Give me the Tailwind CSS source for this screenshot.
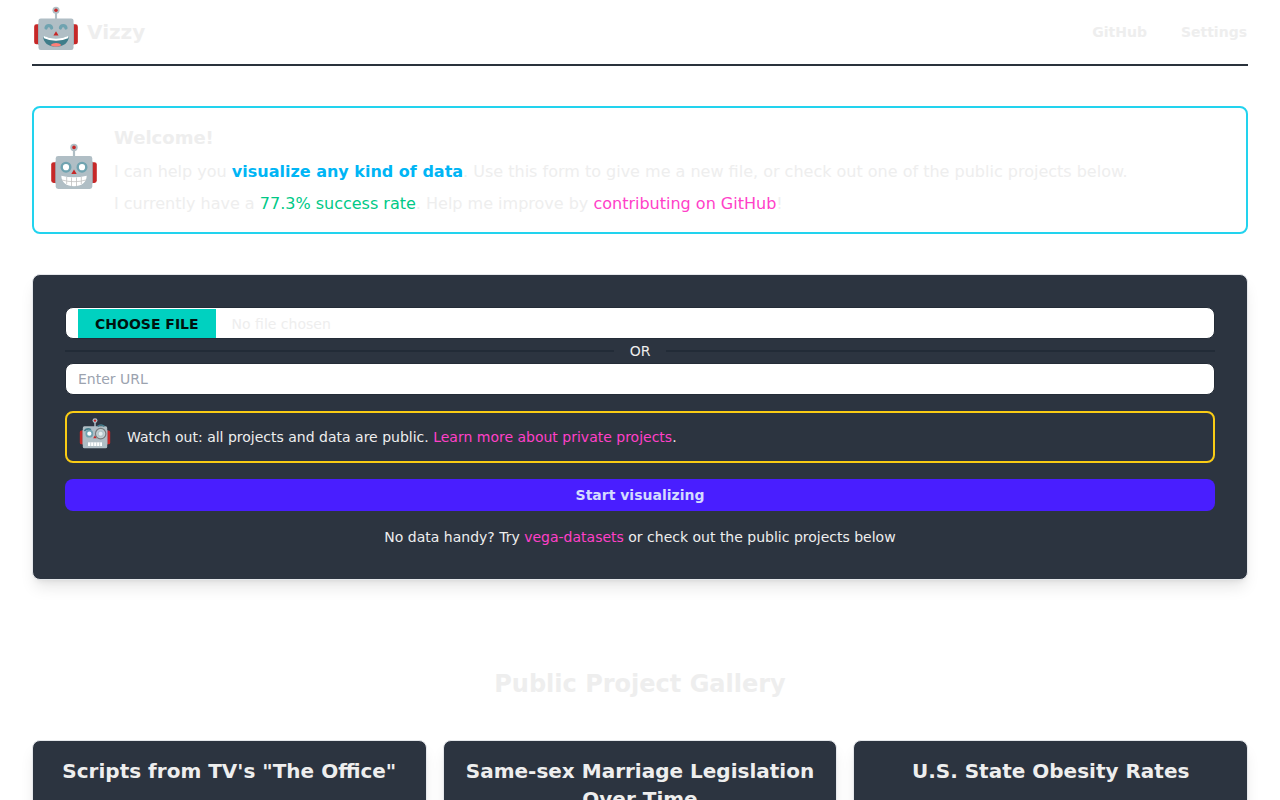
<!DOCTYPE html>
<html lang="en">
<head>
    <meta charset="UTF-8">
    <meta name="viewport" content="width=device-width, initial-scale=1.0">
    <title>Vizzy</title>
    <script src="https://cdn.jsdelivr.net/npm/@tailwindcss/browser@4"></script>
</head>
<body class="bg-white text-[#eeeeee] font-['DejaVu_Sans',sans-serif]">
    <!-- Shared robot head, faces are drawn on top -->
    <svg class="hidden" aria-hidden="true">
        <symbol id="robot" viewBox="0 0 48 48">
            <rect x="22.9" y="7" width="2.2" height="8" fill="#b0bec5"/>
            <circle cx="24" cy="5.4" r="3.7" fill="#b0bec5"/>
            <circle cx="24" cy="5.4" r="1.8" fill="#c62828"/>
            <rect x="1.2" y="20.2" width="8" height="20.8" rx="2.4" fill="#c62828"/>
            <rect x="38.8" y="20.2" width="8" height="20.8" rx="2.4" fill="#c62828"/>
            <path d="M5.3 20v21l1 1V19zM42.7 20v21l-1 1V19z" fill="#90a4ae"/>
            <rect x="5.7" y="14" width="36.6" height="33" rx="2.4" fill="#b0bec5"/>
            <path d="M24 27.5l2.7 4.4h-5.4z" fill="#c62828"/>
        </symbol>
    </svg>

    <div class="px-8 pb-8">
        <header class="flex h-[66px] items-center justify-between border-b-2 border-[#2a323c] px-px">
            <a href="#" class="flex items-center gap-2 text-xl font-bold">
                <span class="pb-2">
                    <svg class="block size-[46px]" viewBox="0 0 48 48" aria-hidden="true">
                        <use href="#robot"/>
                        <path d="M13.6 24c.4-3.3 5.400-3.300 5.800 0M28.600 24c.4-3.300 5.400-3.300 5.800 0" fill="none" stroke="#6fa3b0" stroke-width="3.400" stroke-linecap="round"/>
                        <path d="M10.500 32q13.500 6 27 0C37.300 39.500 32 43.400 24 43.400S10.700 39.500 10.500 32z" fill="#3e7d8a"/>
                        <path d="M10.800 32q13.200 6 26.400 0c0 1-.3 1.900-.7 2.600q-12.500 5.600-25 0c-.4-.7-.7-1.600-.7-2.600z" fill="#fff"/>
                        <path d="M18.300 42c2.500-3 9-3 11.400 0-3.500 1.900-8 1.900-11.400 0z" fill="#ff7f78"/>
                    </svg>
                </span>
                Vizzy
            </a>
            <nav class="flex gap-[34px] text-sm font-bold">
                <a href="#">GitHub</a>
                <a href="#">Settings</a>
            </nav>
        </header>

        <!-- Welcome -->
        <section class="mt-10 flex items-center gap-4 rounded-lg border-2 border-[#22d3ee] p-4">
            <div class="pb-2">
                <svg class="block size-12" viewBox="0 0 48 48" aria-hidden="true">
                    <use href="#robot"/>
                    <circle cx="16" cy="25.200" r="4.300" fill="#fff" stroke="#6fa3b0" stroke-width="2.400"/>
                    <circle cx="32" cy="25.200" r="4.300" fill="#fff" stroke="#6fa3b0" stroke-width="2.400"/>
                    <path d="M11.300 33.800q12.700 3 25.400 0C36.500 40.800 31.500 44.200 24 44.200S11.500 40.800 11.300 33.800z" fill="#fff"/>
                    <path d="M11.800 38q12.200 3.400 24.400 0M16.700 35v7M21.500 35.500v8.500M26.500 35.500v8.500M31.300 35v7" fill="none" stroke="#bfbfbf" stroke-width=".8"/>
                </svg>
            </div>
            <div class="space-y-2">
                <h1 class="text-lg/7 font-bold">Welcome!</h1>
                <p>I can help you <strong class="font-bold text-[#00b5f5]">visualize any kind of data</strong>. Use this form to give me a new file, or check out one of the public projects below.</p>
                <p>I currently have a <span class="text-[#00c987]">77.3% success rate</span>. Help me improve by <a href="#" class="text-[#ff40c8]">contributing on GitHub</a>!</p>
            </div>
        </section>

        <!-- Upload form -->
        <form class="mt-10 rounded-lg border border-[#e5e7eb] bg-[#2c3440] p-8 text-sm shadow-lg">
            <input type="file" aria-label="Data file"
                   class="block h-8 w-full overflow-hidden rounded-lg border border-[#242c37] bg-white pt-px pl-3 text-sm/[30px] file:mr-4 file:h-[30px] file:border-0 file:bg-[#00d1c0] file:px-[17px] file:text-sm file:font-bold file:uppercase file:text-[#00120f]">
            <div class="flex h-6 items-center gap-4">
                <span class="h-0.5 flex-1 bg-[#222b37]"></span>
                OR
                <span class="h-0.5 flex-1 bg-[#222b37]"></span>
            </div>
            <input type="url" placeholder="Enter URL" aria-label="Data URL"
                   class="block h-8 w-full rounded-lg border border-[#242c37] bg-white px-3 text-sm text-gray-800 placeholder:text-[#9ca3af]">
            <div class="mt-4 flex items-center gap-4 rounded-lg border-2 border-[#facc15] px-3 py-1">
                <div class="pb-2">
                    <svg class="block size-8" viewBox="0 0 48 48" aria-hidden="true">
                        <use href="#robot"/>
                        <path d="M8 21q4-5 10-2M28 14q5-4 10 0" fill="none" stroke="#457f8e" stroke-width="2.500"/>
                        <circle cx="15.500" cy="25" r="4.500" fill="#fff" stroke="#6fa3b0" stroke-width="2.600"/>
                        <circle cx="32.500" cy="25" r="7.800" fill="#c5d0d3" stroke="#777b7d" stroke-width="1.800"/>
                        <circle cx="32.500" cy="25" r="4" fill="#e6eeee" stroke="#b3c6ca" stroke-width="2"/>
                        <path d="M13.500 38h21v5.500h-21z" fill="#fff"/>
                        <path d="M17.500 38v5.500M22 38v5.500M26.500 38v5.500M31 38v5.500" stroke="#b0bec5"/>
                    </svg>
                </div>
                <p>Watch out: all projects and data are public. <a href="#" class="text-[#ff40c8]">Learn more about private projects</a>.</p>
            </div>
            <button type="submit" class="mt-4 block h-8 w-full rounded-lg bg-[#491eff] text-sm font-bold text-[#d4dbff]">Start visualizing</button>
            <p class="mt-4 text-center">No data handy? Try <a href="#" class="text-[#ff40c8]">vega-datasets</a> or check out the public projects below</p>
        </form>

        <!-- Gallery -->
        <h2 class="mt-[88px] text-center text-2xl font-bold">Public Project Gallery</h2>
        <div class="mt-10 grid grid-cols-3 gap-4 text-center text-xl/7 font-bold">
            <article class="rounded-lg border border-[#e5e7eb] bg-[#2c3440] p-4 shadow-lg">
                <h3>Scripts from TV's "The Office"</h3>
            </article>
            <article class="rounded-lg border border-[#e5e7eb] bg-[#2c3440] p-4 shadow-lg">
                <h3>Same-sex Marriage Legislation Over Time</h3>
            </article>
            <article class="rounded-lg border border-[#e5e7eb] bg-[#2c3440] p-4 shadow-lg">
                <h3>U.S. State Obesity Rates</h3>
            </article>
        </div>
    </div>
</body>
</html>
